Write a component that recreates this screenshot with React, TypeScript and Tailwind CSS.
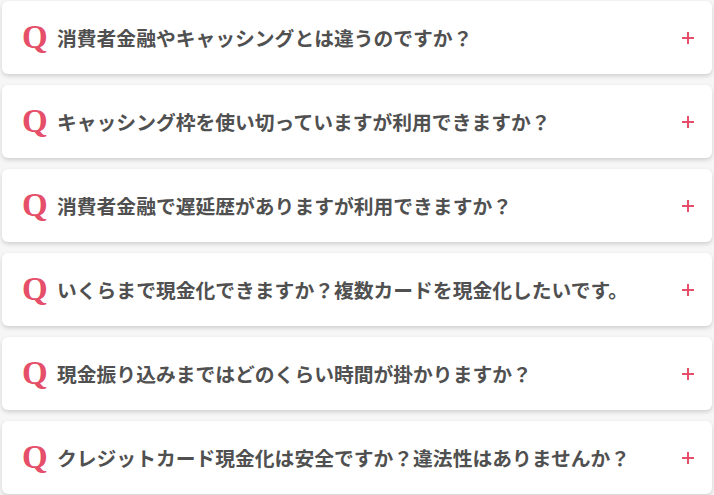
import React from 'react';

const faqs = [
  '消費者金融やキャッシングとは違うのですか？',
  'キャッシング枠を使い切っていますが利用できますか？',
  '消費者金融で遅延歴がありますが利用できますか？',
  'いくらまで現金化できますか？複数カードを現金化したいです。',
  '現金振り込みまではどのくらい時間が掛かりますか？',
  'クレジットカード現金化は安全ですか？違法性はありませんか？',
];

function FaqItem({ question }: { question: string }) {
  return (
    <div className="flex h-[73px] items-center rounded-md bg-white pl-[20px] pr-[18px] shadow-[0_2px_4px_rgba(0,0,0,0.16)]">
      <span className="w-[24px] shrink-0 font-['Liberation_Serif',serif] text-[33px] font-bold leading-none text-[#e64f69]">
        Q
      </span>
      <span className="ml-[11px] flex-1 font-['Noto_Sans_CJK_JP',sans-serif] text-[19.8px] font-bold leading-none text-[#505050]">
        {question}
      </span>
      <span className="relative h-[12px] w-[12px] shrink-0">
        <span className="absolute left-0 top-[5px] h-[2px] w-[12px] bg-[#e64f69]" />
        <span className="absolute left-[5px] top-0 h-[12px] w-[2px] bg-[#e64f69]" />
      </span>
    </div>
  );
}

export default function App() {
  return (
    <main className="min-h-screen bg-[#f6f6f6] px-[2px] pt-[1px]">
      <div className="flex flex-col gap-[11px]">
        {faqs.map((q) => (
          <FaqItem key={q} question={q} />
        ))}
      </div>
    </main>
  );
}
